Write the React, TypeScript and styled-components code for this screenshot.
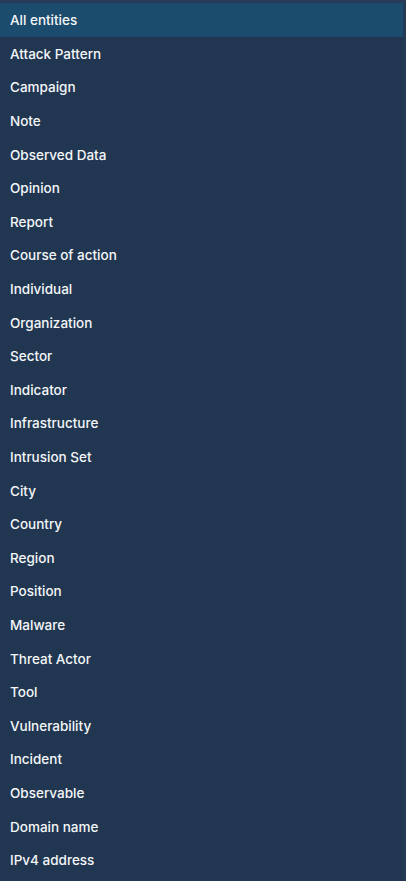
import React from 'react';
import styled, { createGlobalStyle } from 'styled-components';

const GlobalStyle = createGlobalStyle`
  html, body {
    margin: 0;
    padding: 0;
    background-color: #213651;
  }
`;

const entities = [
  'All entities',
  'Attack Pattern',
  'Campaign',
  'Note',
  'Observed Data',
  'Opinion',
  'Report',
  'Course of action',
  'Individual',
  'Organization',
  'Sector',
  'Indicator',
  'Infrastructure',
  'Intrusion Set',
  'City',
  'Country',
  'Region',
  'Position',
  'Malware',
  'Threat Actor',
  'Tool',
  'Vulnerability',
  'Incident',
  'Observable',
  'Domain name',
  'IPv4 address',
];

const Menu = styled.ul`
  list-style: none;
  margin: 0;
  padding: 0;
  width: 406px;
  height: 881px;
  box-sizing: border-box;
  border-top: 3px solid #263b57;
  border-right: 3px solid #233a55;
  background-color: #213651;
  overflow: hidden;
`;

const Item = styled.li<{ $selected?: boolean }>`
  display: flex;
  align-items: center;
  height: 33.6px;
  padding: 1px 10px 0;
  box-sizing: border-box;
  font-family: Inter, Roboto, sans-serif;
  font-size: 13.5px;
  font-weight: 500;
  color: #f4f6f8;
  background-color: ${(p) => (p.$selected ? '#1b4b6d' : 'transparent')};
  cursor: pointer;
`;

const App: React.FC = () => {
  return (
    <>
      <GlobalStyle />
      <Menu>
        {entities.map((name, i) => (
          <Item key={name} $selected={i === 0}>
            {name}
          </Item>
        ))}
      </Menu>
    </>
  );
};

export default App;
